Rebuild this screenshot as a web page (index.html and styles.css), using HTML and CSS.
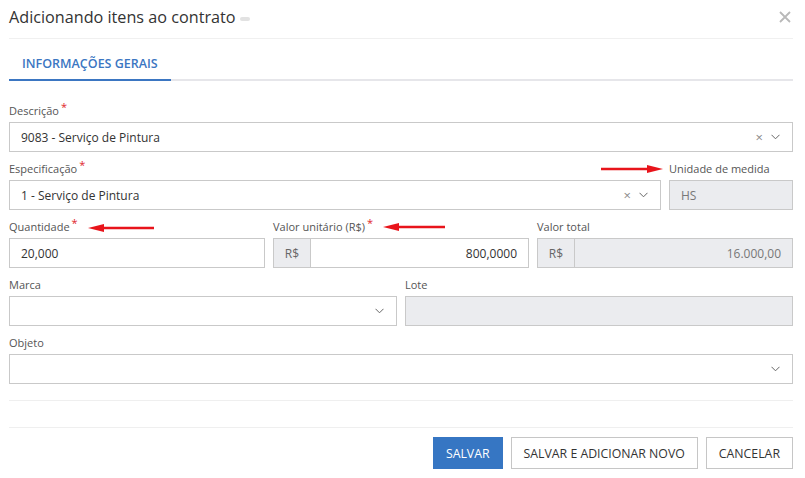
FILE: index.html
```html
<!DOCTYPE html>
<html lang="pt-BR">
<head>
    <meta charset="UTF-8">
    <title>Adicionando itens ao contrato</title>
    <link rel="stylesheet" href="styles.css">
</head>
<body>
    <div class="modal">
        <!-- cabeçalho -->
        <div class="modal-header">
            <h1 class="modal-title">Adicionando itens ao contrato</h1>
            <span class="title-pill"></span>
            <button class="close-btn" aria-label="Fechar">
                <svg width="12" height="12" viewBox="0 0 12 12"><path d="M1 1L11 11M11 1L1 11" stroke="#b9b9b9" stroke-width="1.8" fill="none"/></svg>
            </button>
        </div>

        <!-- abas -->
        <div class="tabs">
            <div class="tab active">INFORMAÇÕES GERAIS</div>
        </div>

        <!-- formulário -->
        <div class="form">
            <div class="field col-12">
                <label>Descrição<span class="req">*</span></label>
                <div class="control select">
                    <span class="value">9083 - Serviço de Pintura</span>
                    <span class="clear">&times;</span>
                    <svg class="chevron" width="9" height="6" viewBox="0 0 9 6"><path d="M0.5 0.8L4.5 4.8L8.5 0.8" stroke="#666" stroke-width="1" fill="none"/></svg>
                </div>
            </div>

            <div class="field col-10">
                <label>Especificação<span class="req">*</span></label>
                <div class="control select">
                    <span class="value">1 - Serviço de Pintura</span>
                    <span class="clear">&times;</span>
                    <svg class="chevron" width="9" height="6" viewBox="0 0 9 6"><path d="M0.5 0.8L4.5 4.8L8.5 0.8" stroke="#666" stroke-width="1" fill="none"/></svg>
                </div>
            </div>
            <div class="field col-2">
                <label>Unidade de medida</label>
                <div class="control disabled"><span class="value">HS</span></div>
                <svg class="arrow arrow-right" width="62" height="8" viewBox="0 0 62 8"><path d="M0 4H48" stroke="#e8141b" stroke-width="2.4"/><path d="M46 0L62 4L46 8Z" fill="#e8141b"/></svg>
            </div>

            <div class="field col-4">
                <label>Quantidade<span class="req">*</span></label>
                <div class="control"><span class="value">20,000</span></div>
                <svg class="arrow arrow-qtd" width="66" height="8" viewBox="0 0 66 8"><path d="M14 4H66" stroke="#e8141b" stroke-width="2.4"/><path d="M16 0L0 4L16 8Z" fill="#e8141b"/></svg>
            </div>
            <div class="field col-4">
                <label>Valor unitário (R$)<span class="req">*</span></label>
                <div class="input-group">
                    <span class="addon">R$</span>
                    <div class="control"><span class="value num">800,0000</span></div>
                </div>
                <svg class="arrow arrow-valor" width="62" height="8" viewBox="0 0 62 8"><path d="M14 4H62" stroke="#e8141b" stroke-width="2.4"/><path d="M16 0L0 4L16 8Z" fill="#e8141b"/></svg>
            </div>
            <div class="field col-4">
                <label>Valor total</label>
                <div class="input-group">
                    <span class="addon">R$</span>
                    <div class="control disabled"><span class="value num">16.000,00</span></div>
                </div>
            </div>

            <div class="field col-6">
                <label>Marca</label>
                <div class="control select">
                    <span class="value"></span>
                    <svg class="chevron" width="9" height="6" viewBox="0 0 9 6"><path d="M0.5 0.8L4.5 4.8L8.5 0.8" stroke="#666" stroke-width="1" fill="none"/></svg>
                </div>
            </div>
            <div class="field col-6">
                <label>Lote</label>
                <div class="control disabled"></div>
            </div>

            <div class="field col-12">
                <label>Objeto</label>
                <div class="control select">
                    <span class="value"></span>
                    <svg class="chevron" width="9" height="6" viewBox="0 0 9 6"><path d="M0.5 0.8L4.5 4.8L8.5 0.8" stroke="#666" stroke-width="1" fill="none"/></svg>
                </div>
            </div>
        </div>

        <div class="spacer"></div>

        <!-- rodapé -->
        <div class="modal-footer">
            <button class="btn btn-primary">SALVAR</button>
            <button class="btn">SALVAR E ADICIONAR NOVO</button>
            <button class="btn">CANCELAR</button>
        </div>
    </div>
</body>
</html>
```

FILE: styles.css
```css
/* reset */
* {
    margin: 0;
    padding: 0;
    box-sizing: border-box;
}

body {
    font-family: "Open Sans", "Liberation Sans", Arial, sans-serif;
    background-color: #ffffff;
    color: #333333;
}

.modal {
    width: 784px;
    margin-left: 9px;
}

/* cabeçalho */
.modal-header {
    height: 39px;
    display: flex;
    align-items: center;
    padding-bottom: 4px;
    border-bottom: 1px solid #f0f0f0;
}

.modal-title {
    font-size: 16.2px;
    font-weight: normal;
    color: #333333;
}

.title-pill {
    width: 10px;
    height: 4px;
    border-radius: 2px;
    background-color: #e2e2e2;
    margin-left: 4px;
    margin-top: 3px;
}

.close-btn {
    margin-left: auto;
    margin-right: 2px;
    border: none;
    background: none;
    display: flex;
}

/* abas */
.tabs {
    display: flex;
    border-bottom: 2px solid #e6e6ea;
}

.tab {
    width: 162px;
    height: 42px;
    padding: 16px 0 0 13px;
    font-size: 12.5px;
    font-weight: 600;
    line-height: 18px;
    color: #3b76c2;
    border-bottom: 2px solid #3b76c2;
    margin-bottom: -2px;
}

/* formulário */
.form {
    display: grid;
    grid-template-columns: repeat(12, 1fr);
    column-gap: 8px;
    row-gap: 9px;
    padding-top: 22px;
}

.col-2 { grid-column: span 2; }
.col-4 { grid-column: span 4; }
.col-6 { grid-column: span 6; }
.col-10 { grid-column: span 10; }
.col-12 { grid-column: span 12; }

.field {
    position: relative;
}

.field label {
    display: block;
    height: 16px;
    line-height: 16px;
    margin-bottom: 3px;
    font-size: 11px;
    color: #555555;
}

.req {
    color: #e0262b;
    font-size: 11px;
    position: relative;
    top: -4px;
    margin-left: 2px;
}

.control {
    height: 30px;
    border: 1px solid #c9c9c9;
    background-color: #ffffff;
    display: flex;
    align-items: center;
    padding: 0 11px;
    font-size: 12px;
    color: #333333;
    flex: 1;
}

.control .value {
    flex: 1;
}

.control .num {
    text-align: right;
}

.control.disabled {
    background-color: #ebecef;
    color: #777777;
}

.control.select {
    padding-right: 12px;
}

.clear {
    color: #8a8a8a;
    font-size: 13px;
    margin-right: 8px;
    line-height: 1;
}

.chevron {
    display: block;
}

.input-group {
    display: flex;
}

.addon {
    width: 37px;
    height: 30px;
    border: 1px solid #c9c9c9;
    border-right: none;
    background-color: #ebecef;
    display: flex;
    align-items: center;
    justify-content: center;
    font-size: 12px;
    color: #666666;
}

/* setas vermelhas de destaque */
.arrow {
    position: absolute;
}

.arrow-right {
    top: 4px;
    left: -68px;
}

.arrow-qtd {
    top: 5px;
    left: 79px;
}

.arrow-valor {
    top: 4px;
    left: 110px;
}

/* rodapé */
.spacer {
    height: 28px;
    margin-top: 16px;
    border-top: 1px solid #efefef;
    border-bottom: 1px solid #efefef;
}

.modal-footer {
    display: flex;
    justify-content: flex-end;
    gap: 8px;
    padding-top: 9px;
}

.btn {
    height: 32px;
    padding: 0 12px;
    font-family: "Open Sans", "Liberation Sans", Arial, sans-serif;
    font-size: 12.3px;
    color: #333333;
    background-color: #ffffff;
    border: 1px solid #c6c6c6;
}

.btn-primary {
    background-color: #3676c3;
    border-color: #3676c3;
    color: #ffffff;
}
```
